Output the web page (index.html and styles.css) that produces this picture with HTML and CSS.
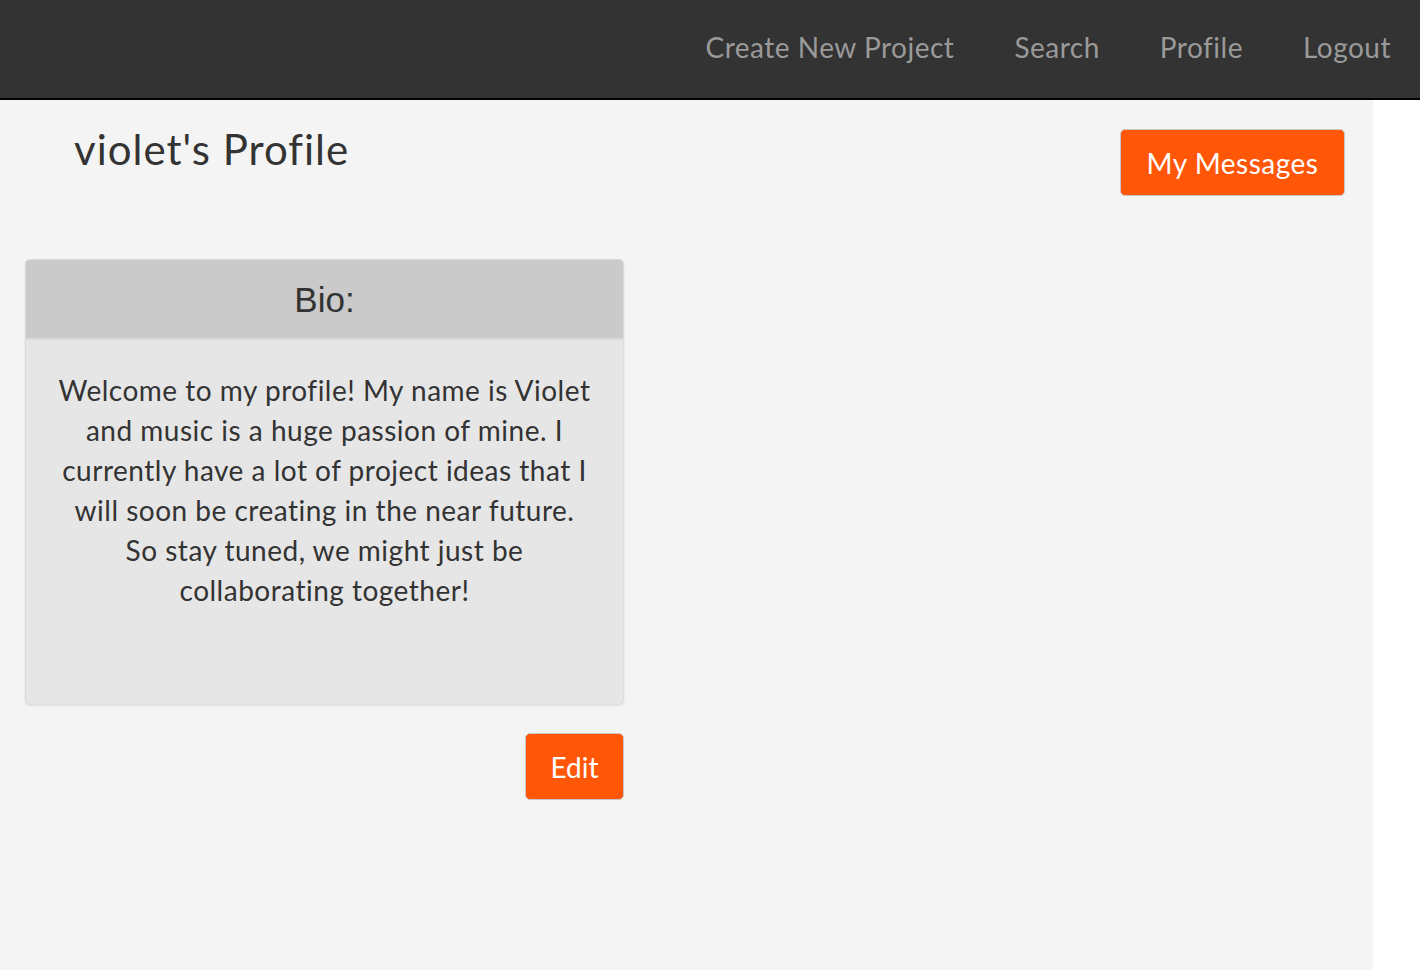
FILE: index.html
```html
<!DOCTYPE html>
<html>
<head>
<meta charset="utf-8">
<link rel="stylesheet" href="styles.css">
</head>
<body>
<nav class="navbar">
  <a class="nav-link" href="#">Create New Project</a>
  <a class="nav-link" href="#">Search</a>
  <a class="nav-link" href="#">Profile</a>
  <a class="nav-link" href="#">Logout</a>
</nav>
<main class="page">
  <div class="title-row">
    <h1 class="title">violet's Profile</h1>
    <button class="btn btn-messages">My Messages</button>
  </div>
  <section class="bio-col">
    <div class="bio-card">
      <div class="bio-head">Bio:</div>
      <p class="bio-text">Welcome to my profile! My name is Violet and music is a huge passion of mine. I currently have a lot of project ideas that I will soon be creating in the near future. So stay tuned, we might just be collaborating together!</p>
    </div>
    <div class="edit-row">
      <button class="btn btn-edit">Edit</button>
    </div>
  </section>
</main>
</body>
</html>
```
FILE: styles.css
```css
html, body {
  margin: 0;
  padding: 0;
  background: #ffffff;
  font-family: "Lato", "Open Sans", sans-serif;
}
.navbar {
  height: 94px;
  padding-bottom: 4px;
  background: #333333;
  border-bottom: 2px solid #000000;
  display: flex;
  justify-content: flex-end;
  align-items: center;
}
.nav-link {
  color: #9a9a9a;
  text-decoration: none;
  font-size: 28px;
  letter-spacing: 0.5px;
  padding: 0 29px 0 31px;
}
.page {
  width: 1373px;
  min-height: 870px;
  background: #f4f4f4;
  box-sizing: border-box;
  padding: 0 0 40px 0;
}
.title-row {
  display: flex;
  justify-content: space-between;
  align-items: flex-start;
  padding: 0 28px 0 74px;
}
.title {
  margin: 24px 0 0 0;
  font-weight: 400;
  font-size: 42px;
  letter-spacing: 1px;
  color: #333333;
}
.btn {
  font-family: inherit;
  color: #ffffff;
  background: #ff5608;
  border: 1px solid #c8c8c8;
  border-radius: 5px;
  font-size: 28px;
  cursor: pointer;
}
.btn-messages {
  margin-top: 29px;
  width: 225px;
  height: 67px;
  letter-spacing: 0.5px;
}
.bio-col {
  width: 599px;
  margin: 63px 0 0 25px;
}
.bio-card {
  border: 1px solid #dcdcdc;
  border-radius: 5px;
  background: #e6e6e6;
  box-shadow: 0 1px 3px rgba(0,0,0,0.08);
  overflow: hidden;
  height: 446px;
  box-sizing: border-box;
}
.bio-head {
  background: #cacaca;
  height: 80px;
  border-bottom: 2px solid #dadada;
  display: flex;
  align-items: center;
  justify-content: center;
  padding-top: 2px;
  box-sizing: border-box;
  font-family: "Liberation Sans", Arial, sans-serif;
  font-size: 35px;
  color: #333333;
}
.bio-text {
  margin: 0;
  padding: 30px 31px 0 31px;
  text-align: center;
  font-size: 28px;
  letter-spacing: 0.5px;
  line-height: 40px;
  color: #333333;
}
.edit-row {
  display: flex;
  justify-content: flex-end;
  margin-top: 28px;
}
.btn-edit {
  width: 99px;
  height: 67px;
}
```
